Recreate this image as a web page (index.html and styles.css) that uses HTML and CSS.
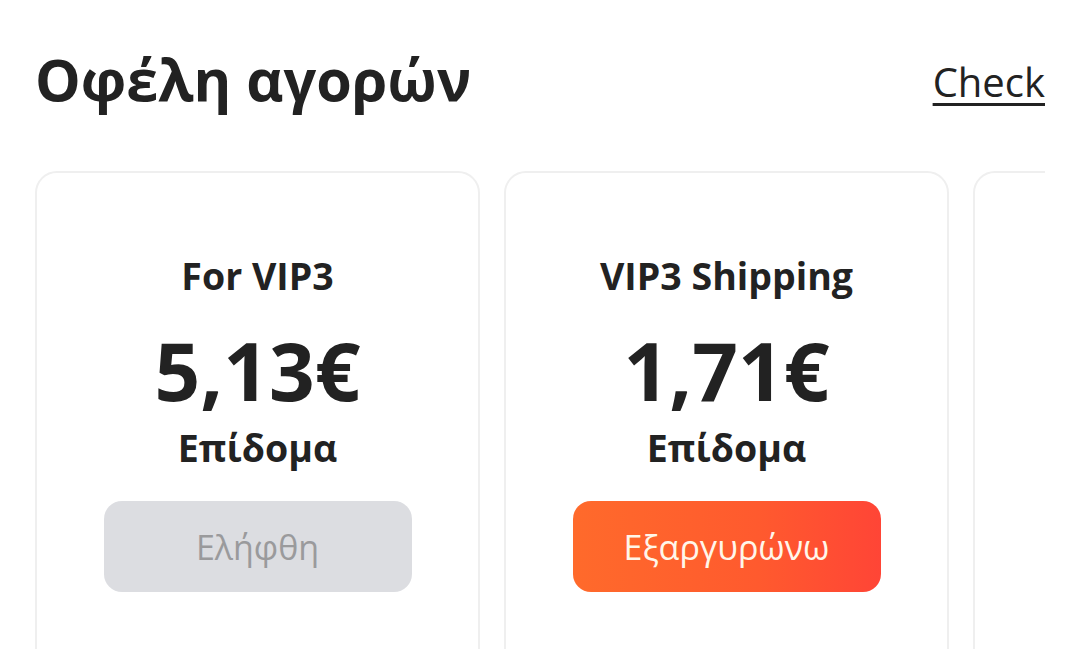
FILE: index.html
```html
<!DOCTYPE html>
<html lang="el">
<head>
<meta charset="utf-8">
<title>Οφέλη αγορών</title>
<link rel="stylesheet" href="styles.css">
</head>
<body>
<main class="page">
  <header class="head">
    <h1 class="title">Οφέλη αγορών</h1>
    <a class="check" href="#">Check</a>
  </header>
  <section class="cards">
    <article class="card">
      <div class="card-name">For VIP3</div>
      <div class="card-price">5,13€</div>
      <div class="card-label">Επίδομα</div>
      <button class="btn btn-done">Ελήφθη</button>
    </article>
    <article class="card">
      <div class="card-name">VIP3 Shipping</div>
      <div class="card-price">1,71€</div>
      <div class="card-label">Επίδομα</div>
      <button class="btn btn-redeem">Εξαργυρώνω</button>
    </article>
    <article class="card"></article>
  </section>
</main>
</body>
</html>
```
FILE: styles.css
```css
html, body {
  margin: 0;
  padding: 0;
  background: #ffffff;
}
body {
  font-family: "Open Sans", "Noto Sans", sans-serif;
  color: #222222;
  width: 1080px;
  height: 649px;
  overflow: hidden;
}
.page {
  padding: 41px 35px 0 35px;
}
.head {
  display: flex;
  justify-content: space-between;
  align-items: flex-start;
}
.title {
  margin: 0;
  font-size: 57.5px;
  line-height: 76px;
  font-weight: 700;
  color: #222222;
}
.check {
  margin-top: 14px;
  font-size: 40px;
  line-height: 54px;
  color: #222222;
  text-decoration: underline;
  text-decoration-thickness: 3px;
  text-underline-offset: 6px;
}
.cards {
  margin-top: 54px;
  display: flex;
  gap: 24px;
  overflow: hidden;
}
.card {
  flex: 0 0 445px;
  box-sizing: border-box;
  height: 520px;
  border: 2px solid #efefef;
  border-radius: 22px;
  padding-top: 79px;
  display: flex;
  flex-direction: column;
  align-items: center;
}
.card-name {
  font-size: 37.5px;
  line-height: 48px;
  font-weight: 700;
}
.card-price {
  margin-top: 20px;
  font-size: 80px;
  line-height: 100px;
  font-weight: 700;
}
.card-label {
  margin-top: 4px;
  font-size: 37.5px;
  line-height: 48px;
  font-weight: 700;
}
.btn {
  margin-top: 29px;
  width: 308px;
  height: 91px;
  border: 0;
  border-radius: 18px;
  font-family: "Open Sans", "Noto Sans", sans-serif;
  font-size: 34px;
  font-weight: 400;
  padding: 0;
}
.btn-done {
  background: #dcdde1;
  color: #9a9a9c;
}
.btn-redeem {
  background: linear-gradient(90deg, #ff6a2b 0%, #ff5a2e 60%, #ff4536 100%);
  color: #fff6ea;
}
```
